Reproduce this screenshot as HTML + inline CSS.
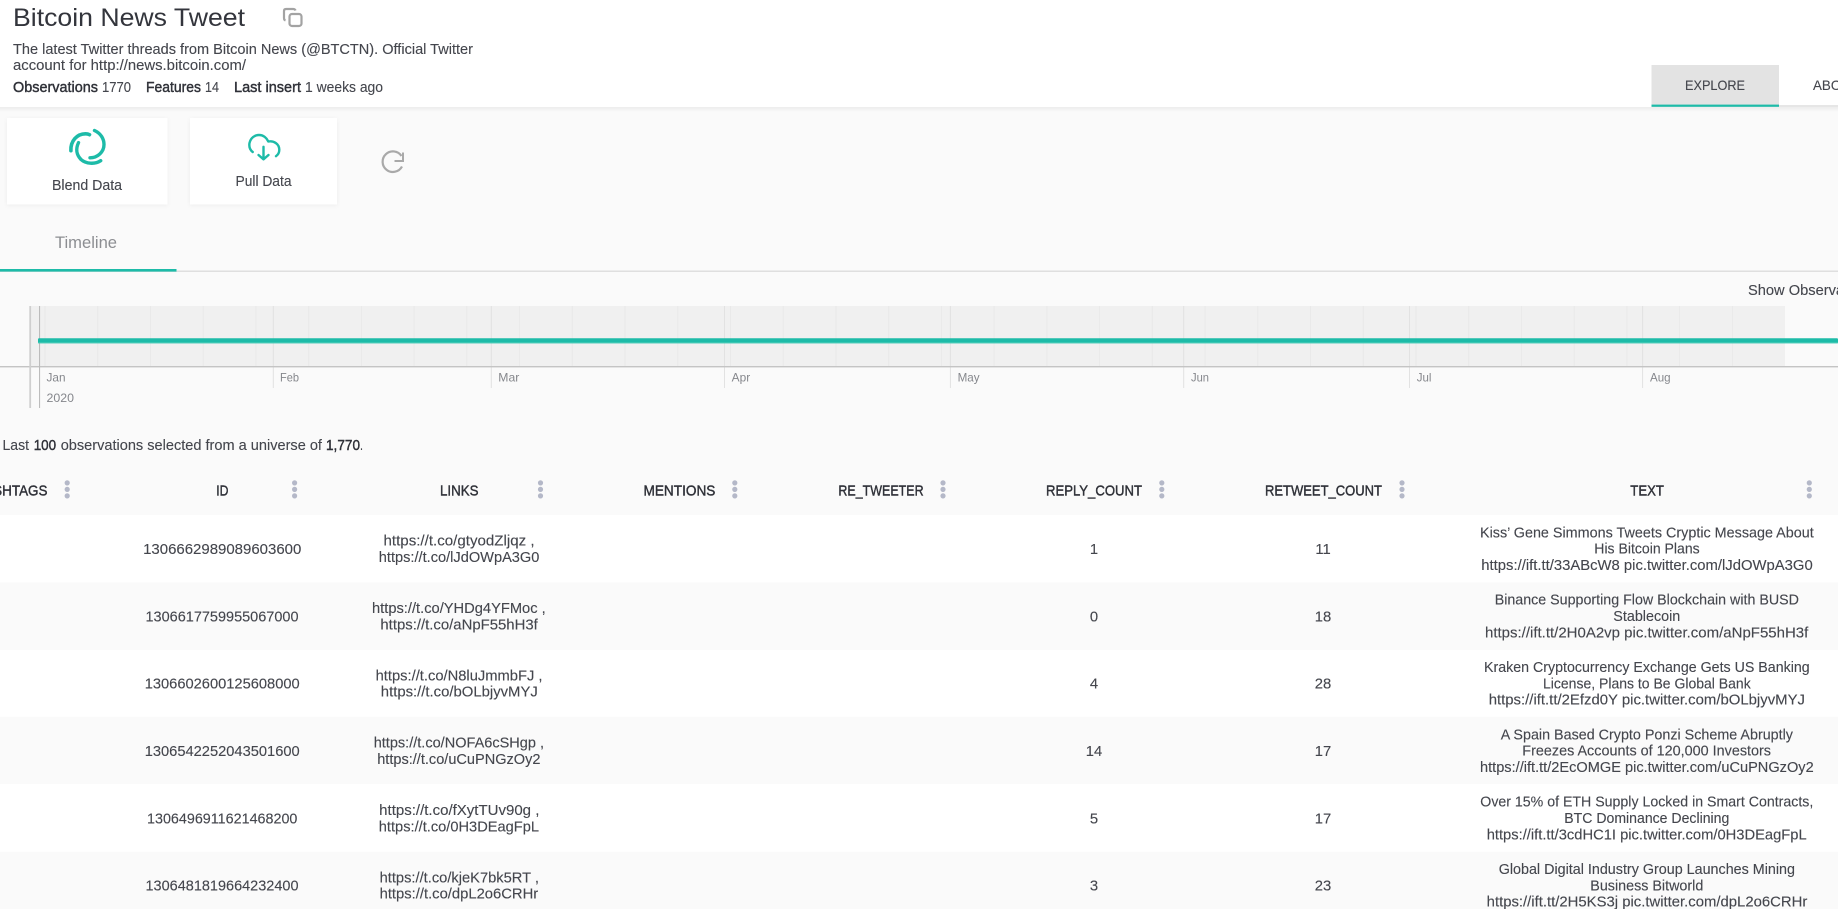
<!DOCTYPE html>
<html lang="en">
<head>
<meta charset="utf-8">
<title>Bitcoin News Tweet</title>
<style>
html,body{margin:0;padding:0;width:1838px;height:909px;overflow:hidden;background:#fafafa}
svg{display:block;filter:blur(.25px)}
text{font-family:"Liberation Sans",sans-serif;font-size:14.8px;fill:#44464d;stroke:#44464d;stroke-width:.12px;white-space:pre}
.m{fill:#2f3138;stroke:#2f3138;stroke-width:.42px}
.s{font-size:11.6px;fill:#85878c;stroke:none}
.g{fill:#b4b8c8}
.w{stroke:#e9e9e9;stroke-width:1}
.mj{stroke:#e2e2e2;stroke-width:1}
.c{text-anchor:middle}
</style>
</head>
<body>
<svg xmlns="http://www.w3.org/2000/svg" width="1838" height="909" viewBox="0 0 1838 909">
<defs>
<linearGradient id="sh" x1="0" y1="0" x2="0" y2="1"><stop offset="0" stop-color="#000" stop-opacity=".055"/><stop offset="1" stop-color="#000" stop-opacity="0"/></linearGradient>
</defs>
<rect width="1838" height="909" fill="#fafafa"/>

<!-- header -->
<rect width="1838" height="107" fill="#fff"/>
<rect y="107" width="1838" height="5" fill="url(#sh)"/>
<text x="13" y="26" textLength="232" lengthAdjust="spacingAndGlyphs" style="font-size:25.4px;fill:#33353c;stroke:none">Bitcoin News Tweet</text>
<g fill="none" stroke="#a3a3a3" stroke-width="2.200">
<rect x="289.500" y="14" width="12" height="12" rx="2.500"/>
<path d="M285.500 20.500 Q284 20 284 18 V11 Q284 9 286 9 H293 Q295 9 295.500 10.500"/>
</g>
<text x="13" y="54" textLength="460" lengthAdjust="spacingAndGlyphs">The latest Twitter threads from Bitcoin News (@BTCTN). Official Twitter</text>
<text x="13" y="70" textLength="233" lengthAdjust="spacingAndGlyphs">account for http://news.bitcoin.com/</text>
<text class="m" x="13" y="92" textLength="85" lengthAdjust="spacingAndGlyphs">Observations</text>
<text x="102" y="92" textLength="29" lengthAdjust="spacingAndGlyphs">1770</text>
<text class="m" x="146" y="92" textLength="55" lengthAdjust="spacingAndGlyphs">Features</text>
<text x="205" y="92" textLength="14" lengthAdjust="spacingAndGlyphs">14</text>
<text class="m" x="234" y="92" textLength="67" lengthAdjust="spacingAndGlyphs">Last insert</text>
<text x="305" y="92" textLength="78" lengthAdjust="spacingAndGlyphs">1 weeks ago</text>

<!-- top tabs -->
<rect x="1779" y="105" width="59" height="2" fill="#e6e6e6"/>
<rect x="1651.500" y="65" width="127.500" height="42" fill="#e3e3e3"/>
<rect x="1651.500" y="104.600" width="127.500" height="2.200" fill="#1dbba8"/>
<text x="1685" y="90" textLength="60" lengthAdjust="spacingAndGlyphs" style="font-size:13.6px">EXPLORE</text>
<text x="1813" y="90" textLength="46" lengthAdjust="spacingAndGlyphs" style="font-size:13.6px">ABOUT</text>

<!-- action cards -->
<rect x="7" y="118" width="160.500" height="86.500" fill="#fff" style="filter:drop-shadow(0 1px 2px rgba(0,0,0,.05))"/>
<rect x="190" y="118" width="147" height="86.500" fill="#fff" style="filter:drop-shadow(0 1px 2px rgba(0,0,0,.05))"/>
<g fill="none" stroke="#1dbba8" stroke-linecap="round">
<path stroke-width="3.600" d="M70.900 150.700 C70.400 141 77 133.800 85.500 133.800 Q87.800 133.800 89.500 134.700"/>
<path stroke-width="3.400" d="M94.500 130.500 C101 133.500 104 139 104 144.500 C104 152 97.500 157.800 90 157.800"/>
<path stroke-width="3.400" d="M78.500 142.700 C75.500 149 76.500 155 81 159.500 C86 164 95 164.500 100.700 160.700"/>
</g>
<g fill="none" stroke="#1dbba8" stroke-width="2.400" stroke-linecap="round" stroke-linejoin="round">
<path d="M252.700 152 C249.500 149.500 249 146 249.500 143 C250.800 137.500 255 135 259 135 C263.500 135 266.800 138 268.300 141.500 C274 140.500 279.300 144 279.300 149.800 C279.300 152.500 278 154.800 276 156.200"/>
<path d="M263.500 146.800 V159.300 M258.500 155 L263.500 159.300 L268.500 155"/>
</g>
<text x="52" y="190" textLength="70" lengthAdjust="spacingAndGlyphs">Blend Data</text>
<text x="235.500" y="186" textLength="56" lengthAdjust="spacingAndGlyphs">Pull Data</text>
<g fill="none" stroke="#a9a9a9" stroke-width="2.200">
<path d="M401.500 156 A10.300 10.300 0 1 0 402 166.500"/>
<path d="M403 152.500 V161 H394.500" stroke-width="2"/>
</g>

<!-- timeline tab -->
<text x="55" y="248" textLength="62" lengthAdjust="spacingAndGlyphs" style="font-size:16.800px;fill:#8c8e92;stroke:none">Timeline</text>
<rect y="270.500" width="1838" height="1.500" fill="#dfdfdf"/>
<rect y="269" width="176.500" height="2.600" fill="#1dbba8"/>
<text x="1748" y="295" textLength="127" lengthAdjust="spacingAndGlyphs">Show Observations</text>

<!-- chart -->
<rect x="31" y="306" width="1754" height="60" fill="#f0f0f0"/>
<path class="w" d="M45 306V366M97.700 306V366M150.500 306V366M203.200 306V366M255.900 306V366M308.700 306V366M361.400 306V366M414.100 306V366M466.800 306V366M519.600 306V366M572.300 306V366M625 306V366M677.800 306V366M730.500 306V366M783.200 306V366M836 306V366M888.700 306V366M941.400 306V366M994.100 306V366M1046.900 306V366M1099.600 306V366M1152.300 306V366M1205.100 306V366M1257.800 306V366M1310.500 306V366M1363.300 306V366M1416 306V366M1468.700 306V366M1521.400 306V366M1574.200 306V366M1626.900 306V366M1679.600 306V366M1732.400 306V366"/>
<path class="mj" d="M273.300 306V388M491.300 306V388M724.500 306V388M950.400 306V388M1183.700 306V388M1409.500 306V388M1642.600 306V388"/>
<rect x="0" y="366" width="1838" height="1.400" fill="#c4c4c4"/>
<rect x="29.300" y="306" width="1.800" height="102" fill="#cfcfcf"/>
<rect x="39" y="306" width="1.100" height="102" fill="#bcbcbc"/>
<rect x="38" y="338.300" width="1800" height="5" rx="1" fill="#1dbba8"/>
<rect x="38" y="342" width="1800" height="1.300" fill="#3ac6b2"/>
<text class="s" x="46.500" y="381.700" textLength="19" lengthAdjust="spacingAndGlyphs">Jan</text>
<text class="s" x="280" y="381.700" textLength="19" lengthAdjust="spacingAndGlyphs">Feb</text>
<text class="s" x="498.300" y="381.700" textLength="21" lengthAdjust="spacingAndGlyphs">Mar</text>
<text class="s" x="731.700" y="381.700" textLength="18.500" lengthAdjust="spacingAndGlyphs">Apr</text>
<text class="s" x="957.600" y="381.700" textLength="22" lengthAdjust="spacingAndGlyphs">May</text>
<text class="s" x="1191" y="381.700" textLength="18" lengthAdjust="spacingAndGlyphs">Jun</text>
<text class="s" x="1416.800" y="381.700" textLength="14.700" lengthAdjust="spacingAndGlyphs">Jul</text>
<text class="s" x="1650" y="381.700" textLength="20.600" lengthAdjust="spacingAndGlyphs">Aug</text>
<text class="s" x="46.500" y="402" textLength="27.500" lengthAdjust="spacingAndGlyphs">2020</text>

<!-- summary -->
<text x="2.500" y="450" textLength="26.500" lengthAdjust="spacingAndGlyphs">Last</text>
<text class="m" x="33.700" y="450" textLength="22.500" lengthAdjust="spacingAndGlyphs">100</text>
<text x="60.700" y="450" textLength="261.300" lengthAdjust="spacingAndGlyphs">observations selected from a universe of</text>
<text class="m" x="326" y="450" textLength="34" lengthAdjust="spacingAndGlyphs">1,770</text>
<text x="360" y="450" textLength="3" lengthAdjust="spacingAndGlyphs">.</text>

<!-- table header -->
<text class="m" x="-25.500" y="495.500" textLength="73" lengthAdjust="spacingAndGlyphs">HASHTAGS</text>
<text class="m" x="216.300" y="495.500" textLength="12.200" lengthAdjust="spacingAndGlyphs">ID</text>
<text class="m" x="440" y="495.500" textLength="38.500" lengthAdjust="spacingAndGlyphs">LINKS</text>
<text class="m" x="643.500" y="495.500" textLength="71.900" lengthAdjust="spacingAndGlyphs">MENTIONS</text>
<text class="m" x="838.400" y="495.500" textLength="85.200" lengthAdjust="spacingAndGlyphs">RE_TWEETER</text>
<text class="m" x="1046" y="495.500" textLength="96" lengthAdjust="spacingAndGlyphs">REPLY_COUNT</text>
<text class="m" x="1265" y="495.500" textLength="117" lengthAdjust="spacingAndGlyphs">RETWEET_COUNT</text>
<text class="m" x="1630.300" y="495.500" textLength="33.700" lengthAdjust="spacingAndGlyphs">TEXT</text>
<g class="g">
<circle cx="67.200" cy="482.900" r="2.600"/><circle cx="67.200" cy="489.400" r="2.600"/><circle cx="67.200" cy="495.900" r="2.600"/>
<circle cx="294.600" cy="482.900" r="2.600"/><circle cx="294.600" cy="489.400" r="2.600"/><circle cx="294.600" cy="495.900" r="2.600"/>
<circle cx="540.500" cy="482.900" r="2.600"/><circle cx="540.500" cy="489.400" r="2.600"/><circle cx="540.500" cy="495.900" r="2.600"/>
<circle cx="734.800" cy="482.900" r="2.600"/><circle cx="734.800" cy="489.400" r="2.600"/><circle cx="734.800" cy="495.900" r="2.600"/>
<circle cx="943" cy="482.900" r="2.600"/><circle cx="943" cy="489.400" r="2.600"/><circle cx="943" cy="495.900" r="2.600"/>
<circle cx="1161.800" cy="482.900" r="2.600"/><circle cx="1161.800" cy="489.400" r="2.600"/><circle cx="1161.800" cy="495.900" r="2.600"/>
<circle cx="1402" cy="482.900" r="2.600"/><circle cx="1402" cy="489.400" r="2.600"/><circle cx="1402" cy="495.900" r="2.600"/>
<circle cx="1809.300" cy="482.900" r="2.600"/><circle cx="1809.300" cy="489.400" r="2.600"/><circle cx="1809.300" cy="495.900" r="2.600"/>
</g>

<!-- rows -->
<rect y="515" width="1838" height="67.300" fill="#fff"/>
<rect y="650" width="1838" height="66.700" fill="#fff"/>
<rect y="784" width="1838" height="67.700" fill="#fff"/>

<!-- row 1 -->
<text x="143.100" y="554" textLength="158.200" lengthAdjust="spacingAndGlyphs">1306662989089603600</text>
<text x="383.500" y="545.700" textLength="151.100" lengthAdjust="spacingAndGlyphs">https://t.co/gtyodZljqz ,</text>
<text x="378.800" y="562" textLength="160.600" lengthAdjust="spacingAndGlyphs">https://t.co/lJdOWpA3G0</text>
<text class="c" x="1094" y="554">1</text>
<text class="c" x="1323" y="554">11</text>
<text x="1480" y="537.300" textLength="333.700" lengthAdjust="spacingAndGlyphs">Kiss’ Gene Simmons Tweets Cryptic Message About</text>
<text x="1594.300" y="553.700" textLength="105.400" lengthAdjust="spacingAndGlyphs">His Bitcoin Plans</text>
<text x="1481.300" y="570" textLength="331.400" lengthAdjust="spacingAndGlyphs">https://ift.tt/33ABcW8 pic.twitter.com/lJdOWpA3G0</text>

<!-- row 2 -->
<text x="145.500" y="621.300" textLength="153" lengthAdjust="spacingAndGlyphs">1306617759955067000</text>
<text x="372" y="613" textLength="173.700" lengthAdjust="spacingAndGlyphs">https://t.co/YHDg4YFMoc ,</text>
<text x="380.400" y="629.300" textLength="157.400" lengthAdjust="spacingAndGlyphs">https://t.co/aNpF55hH3f</text>
<text class="c" x="1094" y="621.300">0</text>
<text class="c" x="1323" y="621.300">18</text>
<text x="1494.700" y="604.600" textLength="304.300" lengthAdjust="spacingAndGlyphs">Binance Supporting Flow Blockchain with BUSD</text>
<text x="1613.300" y="621" textLength="67" lengthAdjust="spacingAndGlyphs">Stablecoin</text>
<text x="1485" y="637.300" textLength="323.300" lengthAdjust="spacingAndGlyphs">https://ift.tt/2H0A2vp pic.twitter.com/aNpF55hH3f</text>

<!-- row 3 -->
<text x="144.700" y="688.700" textLength="155" lengthAdjust="spacingAndGlyphs">1306602600125608000</text>
<text x="375.600" y="680.400" textLength="166.900" lengthAdjust="spacingAndGlyphs">https://t.co/N8luJmmbFJ ,</text>
<text x="380.800" y="696.700" textLength="157" lengthAdjust="spacingAndGlyphs">https://t.co/bOLbjyvMYJ</text>
<text class="c" x="1094" y="688.700">4</text>
<text class="c" x="1323" y="688.700">28</text>
<text x="1484" y="672" textLength="325.700" lengthAdjust="spacingAndGlyphs">Kraken Cryptocurrency Exchange Gets US Banking</text>
<text x="1543" y="688.400" textLength="207.700" lengthAdjust="spacingAndGlyphs">License, Plans to Be Global Bank</text>
<text x="1488.700" y="704.700" textLength="316.300" lengthAdjust="spacingAndGlyphs">https://ift.tt/2Efzd0Y pic.twitter.com/bOLbjyvMYJ</text>

<!-- row 4 -->
<text x="144.700" y="756" textLength="155" lengthAdjust="spacingAndGlyphs">1306542252043501600</text>
<text x="373.700" y="747.700" textLength="170.300" lengthAdjust="spacingAndGlyphs">https://t.co/NOFA6cSHgp ,</text>
<text x="377.200" y="764" textLength="163.300" lengthAdjust="spacingAndGlyphs">https://t.co/uCuPNGzOy2</text>
<text class="c" x="1094" y="756">14</text>
<text class="c" x="1323" y="756">17</text>
<text x="1500.700" y="739.300" textLength="292.300" lengthAdjust="spacingAndGlyphs">A Spain Based Crypto Ponzi Scheme Abruptly</text>
<text x="1522.300" y="755.700" textLength="248.700" lengthAdjust="spacingAndGlyphs">Freezes Accounts of 120,000 Investors</text>
<text x="1480" y="772" textLength="333.700" lengthAdjust="spacingAndGlyphs">https://ift.tt/2EcOMGE pic.twitter.com/uCuPNGzOy2</text>

<!-- row 5 -->
<text x="147" y="823.400" textLength="150.400" lengthAdjust="spacingAndGlyphs">1306496911621468200</text>
<text x="379.200" y="815" textLength="160.200" lengthAdjust="spacingAndGlyphs">https://t.co/fXytTUv90g ,</text>
<text x="378.800" y="831.400" textLength="160.200" lengthAdjust="spacingAndGlyphs">https://t.co/0H3DEagFpL</text>
<text class="c" x="1094" y="823.400">5</text>
<text class="c" x="1323" y="823.400">17</text>
<text x="1480.300" y="806.700" textLength="333" lengthAdjust="spacingAndGlyphs">Over 15% of ETH Supply Locked in Smart Contracts,</text>
<text x="1564.300" y="823" textLength="165" lengthAdjust="spacingAndGlyphs">BTC Dominance Declining</text>
<text x="1486.700" y="839.400" textLength="320" lengthAdjust="spacingAndGlyphs">https://ift.tt/3cdHC1I pic.twitter.com/0H3DEagFpL</text>

<!-- row 6 -->
<text x="145.500" y="890.700" textLength="153" lengthAdjust="spacingAndGlyphs">1306481819664232400</text>
<text x="379.600" y="882.400" textLength="159.400" lengthAdjust="spacingAndGlyphs">https://t.co/kjeK7bk5RT ,</text>
<text x="379.600" y="898.700" textLength="158.600" lengthAdjust="spacingAndGlyphs">https://t.co/dpL2o6CRHr</text>
<text class="c" x="1094" y="890.700">3</text>
<text class="c" x="1323" y="890.700">23</text>
<text x="1498.700" y="874" textLength="296.300" lengthAdjust="spacingAndGlyphs">Global Digital Industry Group Launches Mining</text>
<text x="1590.300" y="890.400" textLength="113" lengthAdjust="spacingAndGlyphs">Business Bitworld</text>
<text x="1486.700" y="906.700" textLength="320.600" lengthAdjust="spacingAndGlyphs">https://ift.tt/2H5KS3j pic.twitter.com/dpL2o6CRHr</text>
</svg>
</body>
</html>
